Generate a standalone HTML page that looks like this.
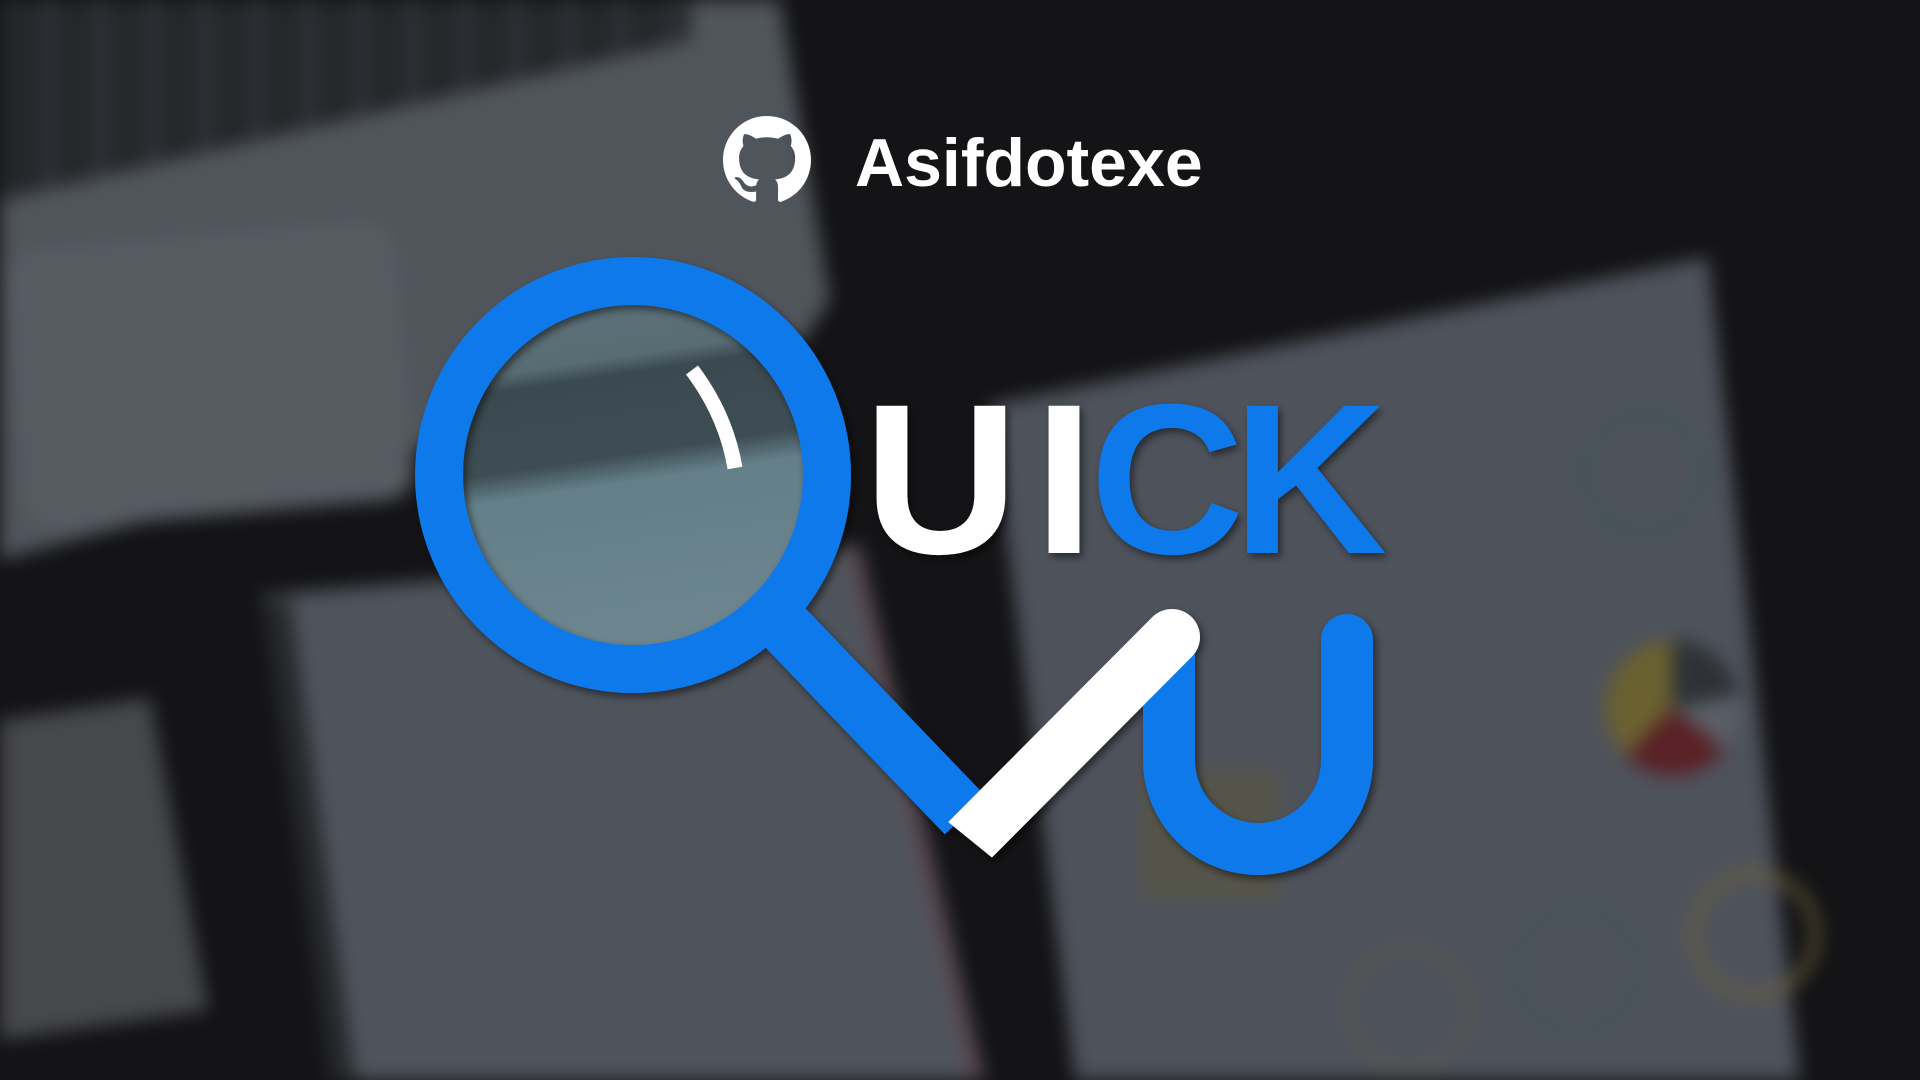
<!DOCTYPE html>
<html><head><meta charset="utf-8"><style>
html,body{margin:0;padding:0;width:1920px;height:1080px;overflow:hidden;background:#141416}
#wrap{position:fixed;left:0;top:0;width:1920px;height:1080px;overflow:hidden}
.bg{position:absolute;inset:0;filter:blur(9px)}
.bg div{position:absolute}
svg{position:absolute;left:0;top:0}
</style></head><body>
<div id="wrap">
<div class="bg">
  <div style="left:0;top:0;width:860px;height:580px;background:#50555c;clip-path:polygon(0 0,780px 0,830px 300px,800px 345px,0 560px)"></div>
  <div style="left:0;top:0;width:720px;height:260px;background:#25272b;clip-path:polygon(0 0,690px 0,690px 40px,0 200px)"></div>
  <div style="left:0;top:0;width:720px;height:260px;background:repeating-linear-gradient(90deg,transparent 0 45px,#44484e 45px 52px);opacity:.6;clip-path:polygon(0 0,690px 0,690px 40px,0 200px)"></div>
  <div style="left:15px;top:235px;width:390px;height:280px;background:#575c63;border-radius:30px;transform:rotate(-5deg)"></div>
  <div style="left:0;top:0;width:220px;height:1080px;background:#46484b;clip-path:polygon(0 720px,150px 698px,208px 1010px,0 1040px)"></div>
  <div style="left:0;top:0;width:1000px;height:1080px;background:#4f545c;clip-path:polygon(262px 595px,860px 545px,985px 1080px,330px 1080px)"></div>
  <div style="left:0;top:0;width:1000px;height:1080px;background:#26282b;clip-path:polygon(262px 600px,290px 598px,355px 1080px,330px 1080px)"></div>
  <div style="left:0;top:0;width:1000px;height:1080px;background:#5a4850;clip-path:polygon(845px 548px,858px 546px,982px 1080px,968px 1080px)"></div>
  <div style="left:0;top:0;width:1920px;height:1080px;background:#4e525b;clip-path:polygon(990px 405px,1708px 257px,1800px 1080px,1075px 1080px)"></div>
  <div style="left:1580px;top:410px;width:110px;height:110px;border-radius:50%;border:9px solid #3e5656"></div>
  <div style="left:1605px;top:640px;width:135px;height:135px;border-radius:50%;background:conic-gradient(#2e3236 0 22%,#5a5e66 22% 36%,#5a2126 36% 62%,#6a6030 62%)"></div>
  <div style="left:1690px;top:870px;width:115px;height:115px;border-radius:50%;border:7px solid #6e603a"></div>
  <div style="left:1512px;top:905px;width:115px;height:115px;border-radius:50%;border:7px solid #3c5654"></div>
  <div style="left:1345px;top:945px;width:115px;height:115px;border-radius:50%;border:6px solid #5a574a"></div>
  <div style="left:1140px;top:770px;width:140px;height:130px;background:#55544a"></div>
</div>
<svg width="1920" height="1080" viewBox="0 0 1920 1080">
  <defs>
    <linearGradient id="lens" x1="0" y1="0" x2="0.15" y2="1">
      <stop offset="0" stop-color="#5f737c"/>
      <stop offset="0.22" stop-color="#586c74"/>
      <stop offset="0.27" stop-color="#3b4a50"/>
      <stop offset="0.5" stop-color="#3d4d53"/>
      <stop offset="0.58" stop-color="#647f89"/>
      <stop offset="1" stop-color="#6c858e"/>
    </linearGradient>
    <filter id="sh" x="-20%" y="-20%" width="140%" height="140%"><feDropShadow dx="3" dy="4" stdDeviation="4" flood-color="#000" flood-opacity="0.5"/></filter>
    <clipPath id="cut"><polygon points="800,702 1100,945 1400,500 1000,380"/></clipPath>
  </defs>
  <circle cx="633" cy="475" r="172" fill="url(#lens)"/>
  <g filter="url(#sh)">
  <line x1="775" y1="617" x2="965" y2="815" stroke="#0a79ea" stroke-width="56"/>
  <circle cx="633" cy="475" r="194" fill="none" stroke="#0a79ea" stroke-width="48"/>
  <path d="M1169,640 V760 A89,89 0 0 0 1347,760 V640" fill="none" stroke="#0a79ea" stroke-width="52" stroke-linecap="round"/>
  <path d="M940,870 L1172,637" stroke="#ffffff" stroke-width="56" stroke-linecap="round" clip-path="url(#cut)"/>
  <g font-family="Liberation Sans, sans-serif" font-weight="bold" font-size="214" text-anchor="middle">
    <text x="941" y="553" fill="#fff">U</text>
    <text x="1064" y="553" fill="#fff">I</text>
    <text x="1167" y="553" fill="#0a79ea">C</text>
    <text x="1310" y="553" fill="#0a79ea">K</text>
  </g>
  </g>
  <path d="M692,370 Q726,415 735,468" fill="none" stroke="#fff" stroke-width="15"/>
  <g transform="translate(723,116) scale(5.5)">
    <path fill="#fff" d="M8 0C3.58 0 0 3.580 0 8c0 3.54 2.29 6.53 5.47 7.59.4.07.55-.17.55-.38 0-.19-.01-.82-.01-1.49-2.010.37-2.53-.49-2.690-.94-.09-.23-.48-.94-.82-1.13-.28-.15-.68-.52-.01-.53.63-.01 1.080.58 1.23.82.72 1.21 1.87.87 2.33.66.07-.52.28-.87.51-1.07-1.78-.2-3.64-.89-3.64-3.95 0-.87.31-1.59.82-2.15-.08-.2-.36-1.02.08-2.12 0 0 .67-.21 2.2.82.64-.18 1.32-.27 2-.27.68 0 1.36.09 2 .27 1.53-1.04 2.2-.82 2.2-.82.44 1.1.16 1.92.08 2.12.51.56.82 1.27.82 2.15 0 3.07-1.87 3.75-3.65 3.95.29.25.54.73.54 1.48 0 1.07-.01 1.93-.01 2.2 0 .21.15.46.55.38A8.013 8.013 0 0016 8c0-4.420-3.58-8-8-8z"/>
  </g>
  <text x="855" y="186" font-family="Liberation Sans, sans-serif" font-weight="bold" font-size="68" fill="#fff">Asifdotexe</text>
</svg>
</div>
</body></html>
